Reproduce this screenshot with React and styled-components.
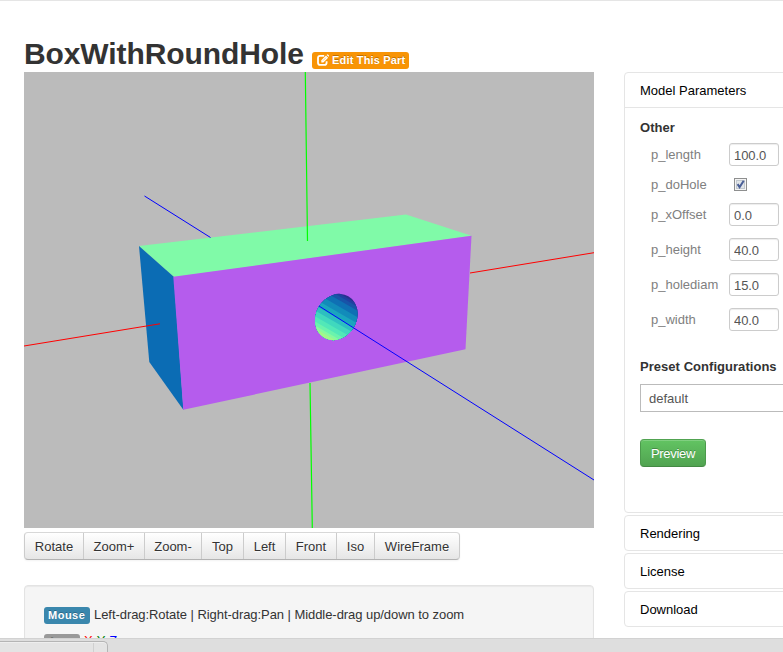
import React from "react";
import styled, { createGlobalStyle } from "styled-components";

const GlobalStyle = createGlobalStyle`
  *, *::before, *::after { box-sizing: border-box; }
  html, body { margin: 0; padding: 0; height: 652px; overflow: hidden; background: #fff; }
  body { font: 13px/20px "Liberation Sans", Arial, sans-serif; color: #333; }
`;

const Page = styled.div`
  width: 783px;
  height: 652px;
  overflow: hidden;
  display: grid;
  grid-template-rows: 638px 14px;
`;
const Main = styled.main`
  border-top: 1px solid #e5e5e5;
  display: grid;
  grid-template-columns: 570px 200px;
  column-gap: 30px;
  padding-left: 24px;
  overflow: hidden;
`;
const Viewer = styled.section`
  min-width: 0;
`;
const Header = styled.header`
  display: flex;
  height: 71px;
  padding-top: 32px;
`;
const Title = styled.h2`
  margin: 0;
  width: 288px;
  font-size: 30px;
  line-height: 42px;
  font-weight: bold;
  letter-spacing: -0.1px;
  white-space: nowrap;
`;
const Badge = styled.span`
  display: inline-flex;
  align-items: center;
  height: 17px;
  border-radius: 3px;
  background: ${(p) => p.$bg};
  color: #fff;
  font-size: 11px;
  line-height: 14px;
  font-weight: bold;
  letter-spacing: ${(p) => p.$spacing || "0"};
  text-shadow: 0 -1px 0 rgba(0, 0, 0, 0.25);
  white-space: nowrap;
`;
const EditBadge = styled(Badge)`
  width: 97px;
  margin-top: 19px;
  padding: 0 0 1px 5px;
  gap: 3px;
`;
const HelpBadge = styled(Badge)`
  width: ${(p) => p.$width};
  margin-right: 4px;
  padding-left: 4px;
`;
const Scene = styled.svg`
  display: block;
  width: 570px;
  height: 456px;
  background: #bbb;
`;
const Toolbar = styled.div`
  display: flex;
  width: 436px;
  height: 28px;
  margin-top: 4px;
  border: 1px solid #d4d4d4;
  border-color: #d8d8d8 #ccc #b3b3b3;
  border-radius: 4px;
  overflow: hidden;
  background: linear-gradient(#fff, #e6e6e6);
  box-shadow: 0 1px 2px rgba(0, 0, 0, 0.05);
`;
const ToolButton = styled.button`
  width: ${(p) => p.$width}px;
  flex: none;
  padding: 2px 0 0;
  border: 0;
  border-left: ${(p) => (p.$first ? "0" : "1px solid #ccc")};
  background: transparent;
  color: #333;
  font: inherit;
  text-shadow: 0 1px 1px rgba(255, 255, 255, 0.75);
`;
const Well = styled.div`
  height: 120px;
  margin-top: 25px;
  padding: 19px;
  border: 1px solid #e3e3e3;
  border-radius: 4px;
  background: #f5f5f5;
  box-shadow: inset 0 1px 1px rgba(0, 0, 0, 0.05);
`;
const HelpLine = styled.div`
  display: flex;
  align-items: center;
  height: 20px;
  margin-bottom: 7px;
  letter-spacing: -0.06px;
  white-space: nowrap;
`;
const Axis = styled.span`
  color: ${(p) => p.$color};
  margin-right: 4px;
  padding-bottom: 3px;
`;
const Sidebar = styled.aside`
  padding-top: 71px;
  display: flex;
  flex-direction: column;
  gap: 2px;
`;
const Panel = styled.section`
  flex: none;
  height: ${(p) => p.$height || 36}px;
  border: 1px solid #e5e5e5;
  border-radius: 4px;
`;
const PanelHeading = styled.div`
  height: 35px;
  padding: 8px 15px 6px;
  color: #000;
  border-bottom: ${(p) => (p.$open ? "1px solid #e5e5e5" : "0")};
`;
const PanelBody = styled.div`
  padding: 10px 15px;
`;
const Subheading = styled.div`
  height: 20px;
  font-weight: bold;
  white-space: nowrap;
  letter-spacing: 0.04px;
`;
const Fields = styled.div`
  display: grid;
  row-gap: 12px;
  margin: 5px 0 26px 11px;
`;
const Field = styled.label`
  display: grid;
  grid-template-columns: 78px 50px;
  align-items: center;
  height: ${(p) => (p.$check ? 13 : 23)}px;
  line-height: 13px;
  color: #808080;
`;
const TextInput = styled.input`
  width: 50px;
  height: 23px;
  padding: 2px 5px 0 4px;
  border: 1px solid #ccc;
  border-radius: 3px;
  outline: 0;
  font: inherit;
  letter-spacing: -0.1px;
  color: #555;
  background: #fff;
  box-shadow: inset 0 1px 1px rgba(0, 0, 0, 0.075);
`;
const CheckSvg = styled.svg`
  display: block;
  width: 13px;
  height: 13px;
  margin-left: 5px;
`;
const Select = styled.div`
  width: 190px;
  height: 28px;
  margin: 7px 0 27px;
  padding: 4px 8px;
  border: 1px solid #bbb;
  color: #555;
`;
const PreviewButton = styled.button`
  display: block;
  width: 66px;
  height: 28px;
  padding: 1px 0 0;
  border: 1px solid #51a351;
  border-color: #51a351 #4c9a4c #448944;
  border-radius: 4px;
  background: linear-gradient(#62c462, #51a351);
  box-shadow: inset 0 1px 0 rgba(255, 255, 255, 0.2);
  color: #fff;
  font: inherit;
  letter-spacing: -0.3px;
  text-shadow: 0 -1px 0 rgba(0, 0, 0, 0.25);
`;
const StatusBar = styled.footer`
  border-top: 1px solid #d2d2d2;
  background: #dedede;
  padding-top: 2px;
  overflow: hidden;
`;
const StatusTab = styled.div`
  display: flex;
  justify-content: flex-end;
  width: 108px;
  height: 20px;
  border: 1px solid #b5b5b5;
  border-width: 1px 1px 0 0;
  border-radius: 0 5px 0 0;
  background: #e4e4e4;
  box-shadow: inset 0 1px 0 #eee;
`;
const TabEdge = styled.span`
  width: 14px;
  margin-top: 1px;
  border-left: 1px solid #d0d0d0;
`;

const tools = [
  ["Rotate", 58],
  ["Zoom+", 61],
  ["Zoom-", 57],
  ["Top", 42],
  ["Left", 42],
  ["Front", 51],
  ["Iso", 38],
  ["WireFrame", 85],
];

const fields = [
  ["p_length", "100.0"],
  ["p_doHole", null],
  ["p_xOffset", "0.0"],
  ["p_height", "40.0"],
  ["p_holediam", "15.0"],
  ["p_width", "40.0"],
];

const holeBands = [
  [-30, "#2b2f8f"],
  [-22, "#2040a0"],
  [-19.5, "#1854a8"],
  [-16, "#0f70b4"],
  [-10.5, "#128bba"],
  [-5, "#1aa5be"],
  [0.5, "#2dbfc0"],
  [5, "#40d8be"],
  [10, "#52e8b8"],
  [14.5, "#6bf3ad"],
  [18, "#88f99e"],
  [20.5, "#a4f58a"],
];

function EditIcon() {
  return (
    <svg width="12" height="12" viewBox="0 0 12 12" fill="none" stroke="#fff">
      <path d="M7.2 1.8H3.2Q1 1.8 1 4V8.7Q1 10.9 3.2 10.9H7.4Q9.6 10.9 9.6 8.7V7.3" strokeWidth="1.8" />
      <path d="M4.3 8.5V6.3L9 1.6L11.1 3.7L6.4 8.4Z" fill="#fff" stroke="none" />
      <path d="M9.6 1L10.2.4Q10.6 0 11 .4L12 1.4Q12.3 1.8 12 2.2L11.6 2.8Z" fill="#fff" stroke="none" />
      <path d="M6 6.6L9 3.6" stroke="#f89406" strokeWidth=".5" />
    </svg>
  );
}

function Checkbox() {
  return (
    <CheckSvg viewBox="0 0 13 13">
      <rect x=".5" y=".5" width="12" height="12" fill="#f4f4f4" stroke="#8e8f8f" />
      <rect x="2.5" y="2.5" width="8" height="8" fill="#e1e5e8" stroke="#c2c8ce" />
      <path d="M3.6 6.1L5.6 9.1L9.7 2.8" fill="none" stroke="#4a5f97" strokeWidth="2" />
    </CheckSvg>
  );
}

function ModelScene() {
  return (
    <Scene viewBox="24 72 570 456">
      <defs>
        <clipPath id="hole">
          <ellipse cx="336.3" cy="317" rx="20.3" ry="24" transform="rotate(30 336.3 317)" />
        </clipPath>
      </defs>
      <path d="M139 246L406 214.5L471.5 235.8L174 277Z" fill="#80faa8" />
      <path d="M139 246L174 277L183.5 410L149.3 362Z" fill="#0b6cb4" />
      <path d="M173.3 276.8L471.5 235.8L465.5 349.2L183.3 409.8Z" fill="#b55ced" />
      <g clipPath="url(#hole)">
        <g transform="translate(336.3 317) rotate(30)">
          {holeBands.map(([y, color]) => (
            <rect key={y} x="-40" y={y} width="80" height="60" fill={color} />
          ))}
        </g>
      </g>
      <g fill="none" strokeWidth="1">
        <path d="M305.3 72L307.5 241M310 383L312.3 528" stroke="#0f0" strokeWidth="1.2" />
        <path d="M24 346L160 323.8M470 273L594 252.7" stroke="#f00" />
        <path d="M144.5 196L210.5 237.5M319 306L594 480" stroke="#00f" />
      </g>
    </Scene>
  );
}

export default function App() {
  return (
    <>
      <GlobalStyle />
      <Page>
        <Main>
          <Viewer>
            <Header>
              <Title>BoxWithRoundHole</Title>
              <EditBadge $bg="#f89406" $spacing="0.18px">
                <EditIcon />
                Edit This Part
              </EditBadge>
            </Header>
            <ModelScene />
            <Toolbar>
              {tools.map(([name, width], i) => (
                <ToolButton key={name} $width={width} $first={i === 0}>
                  {name}
                </ToolButton>
              ))}
            </Toolbar>
            <Well>
              <HelpLine>
                <HelpBadge $bg="#3a87ad" $width="46px" $spacing="0.5px">Mouse</HelpBadge>
                Left-drag:Rotate | Right-drag:Pan | Middle-drag up/down to zoom
              </HelpLine>
              <HelpLine>
                <HelpBadge $bg="#999" $width="36px" $spacing="0.3px">Axes:</HelpBadge>
                <Axis $color="#f00">X</Axis>
                <Axis $color="#008000">Y</Axis>
                <Axis $color="#00f">Z</Axis>
              </HelpLine>
            </Well>
          </Viewer>
          <Sidebar>
            <Panel $height={441}>
              <PanelHeading $open>Model Parameters</PanelHeading>
              <PanelBody>
                <Subheading>Other</Subheading>
                <Fields>
                  {fields.map(([name, value]) => (
                    <Field key={name} $check={value === null}>
                      {name}
                      {value === null ? <Checkbox /> : <TextInput defaultValue={value} />}
                    </Field>
                  ))}
                </Fields>
                <Subheading>Preset Configurations</Subheading>
                <Select>default</Select>
                <PreviewButton>Preview</PreviewButton>
              </PanelBody>
            </Panel>
            {["Rendering", "License", "Download"].map((name) => (
              <Panel key={name}>
                <PanelHeading>{name}</PanelHeading>
              </Panel>
            ))}
          </Sidebar>
        </Main>
        <StatusBar>
          <StatusTab>
            <TabEdge />
          </StatusTab>
        </StatusBar>
      </Page>
    </>
  );
}
